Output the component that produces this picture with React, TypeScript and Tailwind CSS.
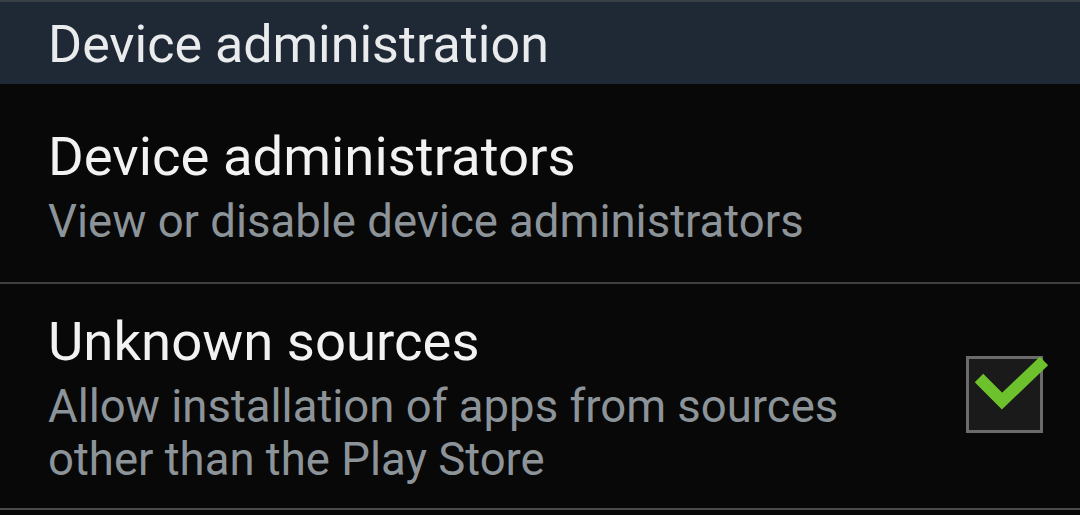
export default function App() {
  return (
    <div
      className="w-[1080px] h-[515px] overflow-hidden bg-[#080808] flex flex-col"
      style={{ fontFamily: "Roboto, 'Noto Sans', sans-serif" }}
    >
      <div className="h-[2px] bg-[#3a4047]" />
      <div className="h-[82px] bg-[#1e2935] pl-[48px] pt-[17px]">
        <div className="text-[52px] leading-[52px] text-[#e9ebed]">Device administration</div>
      </div>

      <div className="h-[198px] pl-[48px] pt-[45px] flex flex-col">
        <div className="text-[54.5px] leading-[54px] text-[#f2f2f2]">Device administrators</div>
        <div className="mt-[12px] text-[45.5px] leading-[53px] text-[#8c9499]">
          View or disable device administrators
        </div>
      </div>
      <div className="h-[2px] bg-[#404040]" />

      <div className="h-[224px] pl-[48px] pr-[37px] flex items-center justify-between">
        <div className="flex flex-col self-start pt-[30px]">
          <div className="text-[54.5px] leading-[54px] text-[#f2f2f2]">Unknown sources</div>
          <div className="mt-[12px] text-[45.5px] leading-[53px] text-[#8c9499]">
            Allow installation of apps from sources
            <br />
            other than the Play Store
          </div>
        </div>
        <div className="relative w-[77px] h-[77px] border-[3px] border-[#6b6b6b] bg-[#1a1a1a] mt-[-4px]">
          <svg
            className="absolute left-[-3px] top-[-3px] overflow-visible"
            width="77"
            height="77"
            viewBox="0 0 77 77"
          >
            <polyline
              points="13,22 36,45 78,5"
              fill="none"
              stroke="#6cc12c"
              strokeWidth="12"
              strokeLinejoin="miter"
            />
          </svg>
        </div>
      </div>
      <div className="h-[2px] bg-[#4a4a4a]" />
    </div>
  );
}
